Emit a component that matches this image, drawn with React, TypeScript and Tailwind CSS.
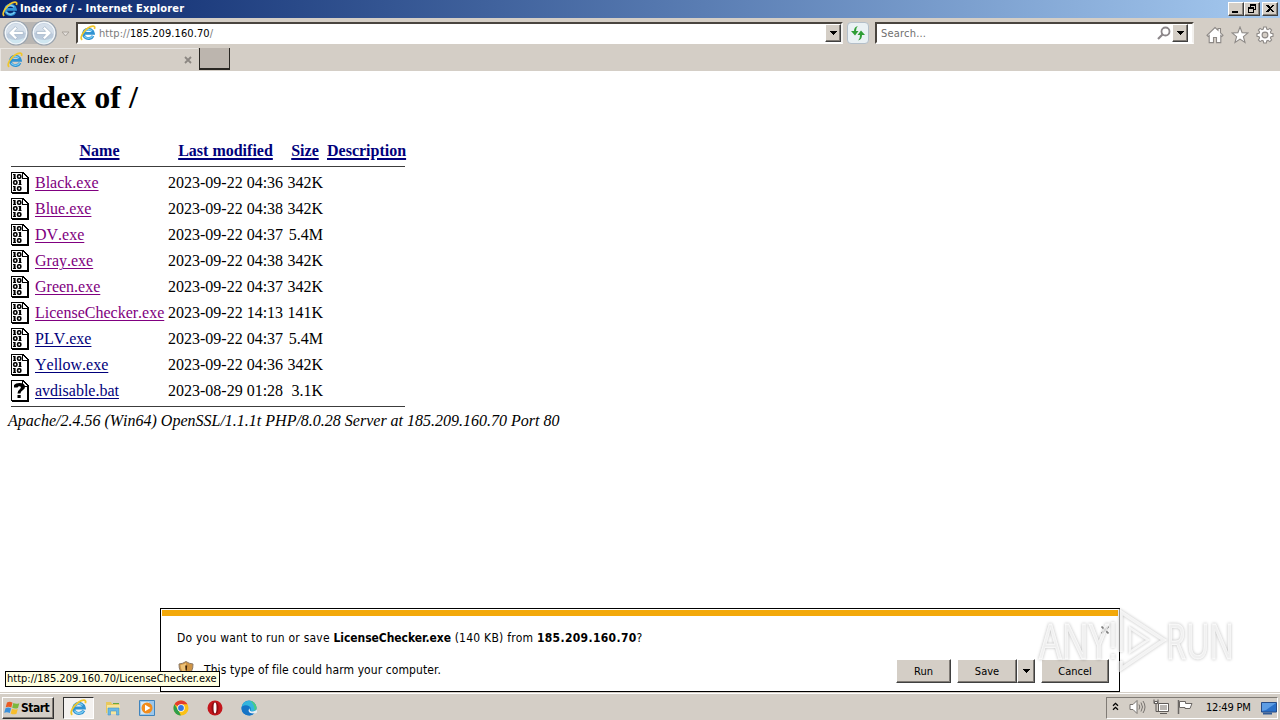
import type { ReactNode } from "react";

interface FileEntry {
  name: string;
  modified: string;
  size: string;
  visited?: boolean;
  unknown?: boolean;
}

const FILES: FileEntry[] = [
  { name: "Black.exe", modified: "2023-09-22 04:36", size: "342K", visited: true },
  { name: "Blue.exe", modified: "2023-09-22 04:38", size: "342K", visited: true },
  { name: "DV.exe", modified: "2023-09-22 04:37", size: "5.4M", visited: true },
  { name: "Gray.exe", modified: "2023-09-22 04:38", size: "342K", visited: true },
  { name: "Green.exe", modified: "2023-09-22 04:37", size: "342K", visited: true },
  { name: "LicenseChecker.exe", modified: "2023-09-22 14:13", size: "141K", visited: true },
  { name: "PLV.exe", modified: "2023-09-22 04:37", size: "5.4M" },
  { name: "Yellow.exe", modified: "2023-09-22 04:36", size: "342K" },
  { name: "avdisable.bat", modified: "2023-08-29 01:28", size: "3.1K", unknown: true },
];

function IeIcon({ className }: { className: string }) {
  return (
    <svg viewBox="0 0 16 16" className={className} aria-hidden="true">
      <path
        d="M13 10.800A5 4.700 0 1 1 13.400 8.400H4.500"
        fill="none"
        stroke="#2f93d3"
        strokeWidth="2.900"
      />
      <path
        d="M12.600 11A4.600 4.300 0 0 1 4.300 11M4.200 7.300A4.600 4.300 0 0 1 12 6"
        fill="none"
        stroke="#7dcdf3"
        strokeWidth="1.300"
      />
      <path
        d="M2.200 14.900C-.8 13 3.400 6 8 3c4.300-2.900 7.800-2.600 6.400 1"
        fill="none"
        stroke="#f0c62c"
        strokeWidth="1.700"
      />
    </svg>
  );
}

function BinaryIcon() {
  return (
    <svg viewBox="0 0 18 22" className="h-[22px] w-[18px]" aria-hidden="true">
      <g shapeRendering="crispEdges">
        <path d="M0 0h12l6 6v16H1V21H0z" fill="#000" />
        <path d="M1 1h10v6h5v13H1z" fill="#fff" />
        <path d="M12 2l4 4h-4z" fill="#fff" />
      </g>
      <g fill="#000">
        <path d="M2 2h2.600v4H5v1H2V6h.6V3H2z" />
        <path d="M7.500 8h2.600v4h.4v1h-3v-1h.6V9h-.6z" />
        <path d="M2 14h2.600v4H5v1H2v-1h.6v-3H2z" />
      </g>
      <g fill="none" stroke="#000" strokeWidth="1.600">
        <rect x="6.600" y="2.700" width="3.200" height="3.600" rx="1.200" />
        <rect x="2.700" y="8.700" width="3.200" height="3.600" rx="1.200" />
        <rect x="6.600" y="14.700" width="3.200" height="3.600" rx="1.200" />
      </g>
    </svg>
  );
}

function UnknownIcon() {
  return (
    <svg viewBox="0 0 18 22" className="h-[22px] w-[18px]" aria-hidden="true">
      <g shapeRendering="crispEdges">
        <path d="M0 0h12l6 6v16H1V21H0z" fill="#000" />
        <path d="M1 1h10v6h5v13H1z" fill="#fff" />
        <path d="M12 2l4 4h-4z" fill="#fff" />
      </g>
      <path d="M3 7.500V5q1.500-2 5.500-2 5.500 0 5.500 4 0 2-2.300 3.200T9.500 13.500H6.500q0-3 2.500-4.500 1.500-1.500.5-2.500Q7.500 5.500 6.500 7.500zM6.500 15h3.200v3H6.500z" fill="#000" />
    </svg>
  );
}

function Arrow({ className = "" }: { className?: string }) {
  return (
    <svg viewBox="0 0 7 4" className={`h-1 w-[7px] ${className}`} shapeRendering="crispEdges" aria-hidden="true">
      <path d="M0 0h7L3.500 4z" fill="#000" />
    </svg>
  );
}

function RoundArrow({ flip = false }: { flip?: boolean }) {
  return (
    <svg viewBox="0 0 26 26" className={`size-[26px] ${flip ? "-scale-x-100" : ""}`} aria-hidden="true">
      <circle cx="13" cy="13" r="12" fill="#d3dbe4" stroke="#9aa4af" strokeWidth="1.200" />
      <circle cx="13" cy="13" r="10.600" fill="#bccbdc" stroke="#f4f8fb" strokeWidth="1.200" />
      <path d="M3 14a10 10 0 0 1 20-1c-5-2-14-1-20 1z" fill="#d5dfea" />
      <path d="M5 18q8 4 16 0-3 5.500-8 5.500T5 18z" fill="#cfe6f0" />
      <path
        d="M5.500 13l6.800-6.500 1.900 1.900-2.800 3h8.900v3.200h-8.900l2.800 3-1.900 1.900z"
        fill="#fff"
        stroke="#9eb0c4"
        strokeWidth=".7"
      />
    </svg>
  );
}

function CaptionButton({ children, className = "" }: { children: ReactNode; className?: string }) {
  return (
    <span
      className={`flex h-[14px] w-4 border border-t-white border-r-[#404040] border-b-[#404040] border-l-white bg-[#d4cec6] shadow-[inset_-1px_-1px_0_#8a857e] ${className}`}
    >
      <svg viewBox="0 0 14 12" className="h-3 w-[14px]" shapeRendering="crispEdges" aria-hidden="true">
        {children}
      </svg>
    </span>
  );
}

function PushButton({ children, className }: { children: ReactNode; className: string }) {
  return (
    <button
      className={`flex items-center justify-center border border-t-white border-r-[#404040] border-b-[#404040] border-l-white bg-[#d4cec6] shadow-[inset_-1px_-1px_0_#807b75] ${className}`}
    >
      {children}
    </button>
  );
}

function TitleBar() {
  return (
    <div className="flex h-[18px] items-center bg-linear-to-r from-[#0a246a] to-[#a6caf0] pr-[2px] pl-[2px]">
      <IeIcon className="size-4" />
      <span className="ml-[2px] pt-px text-[11px] font-bold tracking-[0.16px] text-white">
        Index of / - Internet Explorer
      </span>
      <div className="ml-auto flex">
        <CaptionButton>
          <path d="M3 8h6v2H3z" />
        </CaptionButton>
        <CaptionButton>
          <path d="M5 1h6v6H9V6h1V3H6v1H5zM3 4h6v6H3zM4 6v3h4V6z" fillRule="evenodd" />
        </CaptionButton>
        <CaptionButton className="ml-[2px]">
          <path d="M3 2h2l2 2 2-2h2L8 5.500 11 9H9L7 7 5 9H3l3-3.500z" />
        </CaptionButton>
      </div>
    </div>
  );
}

function NavBar() {
  return (
    <div className="flex h-[30px] items-center">
      <div className="ml-[3px] flex h-[22px] w-[54px] items-center gap-[2px] rounded-full bg-[#b9b6b3]">
        <RoundArrow />
        <RoundArrow flip />
      </div>
      <svg viewBox="0 0 9 6" className="mt-[2px] ml-1 h-[6px] w-[9px]" aria-hidden="true">
        <path d="M1 1h7L4.500 5z" fill="#e4e0dc" stroke="#aaa49d" />
      </svg>
      <div className="ml-[6px] flex h-[22px] w-[767px] items-center border-2 border-t-[#4a453f] border-r-[#f3f1ee] border-b-white border-l-[#4a453f] bg-white pl-[2px]">
        <IeIcon className="size-4" />
        <span className="ml-[3px] pt-[2px] text-[11px] tracking-[0.08px] text-[#7b7b7b]">
          http://<span className="text-black">185.209.160.70</span>/
        </span>
        <PushButton className="ml-auto h-[18px] w-4">
          <Arrow />
        </PushButton>
      </div>
      <div className="ml-[4px] flex size-[22px] items-center justify-center rounded-sm border border-[#b4bfc9] bg-[#eaf1f4]">
        <svg viewBox="0 0 16 16" className="size-4" fill="#2f9e35" aria-hidden="true">
          <path d="M7.800 1Q4 2 4 6H1l4 4.500L8.500 6H6q-.2-3 1.800-5z" />
          <path d="M8.200 15.500Q12 14.500 12 10h3l-4-4.500L7.500 10H10q.2 3.500-1.800 5.500z" />
        </svg>
      </div>
      <div className="ml-[6px] flex h-[22px] w-[319px] items-center border-2 border-t-[#4a453f] border-r-[#f3f1ee] border-b-white border-l-[#4a453f] bg-white pl-1">
        <span className="pt-[3px] text-[11px] tracking-[0.2px] text-[#6f6f6f]">Search...</span>
        <svg viewBox="0 0 14 14" className="ml-auto size-[14px]" fill="none" aria-hidden="true">
          <circle cx="8.500" cy="5.500" r="4" stroke="#8b8689" strokeWidth="1.800" />
          <path d="M5.500 8.500L1 13" stroke="#8b8689" strokeWidth="2.200" />
        </svg>
        <PushButton className="mr-[4px] ml-[1px] h-[18px] w-4">
          <Arrow />
        </PushButton>
      </div>
      <div className="ml-[12px] flex gap-[7px] pt-1">
        <svg viewBox="0 0 18 18" className="size-[18px]" fill="#fff" stroke="#8d8986" strokeWidth="1.100" aria-hidden="true">
          <path d="M9 1.500L12 4.300V2.500h2.500v4.300l2.500 2.500-1.200 1.200-1-.9v7H10.500V11.500h-3v5.100H3.200v-7l-1 .9L1 9.300z" />
        </svg>
        <svg viewBox="0 0 18 18" className="size-[18px]" fill="#fff" stroke="#8d8986" strokeWidth="1.100" aria-hidden="true">
          <path d="M9 1l2.100 5.600 5.900.3-4.600 3.700 1.600 5.800L9 13.100l-5 3.300 1.600-5.800L1 6.900l5.900-.3z" />
        </svg>
        <svg viewBox="0 0 18 18" className="size-[18px]" fill="#fff" stroke="#8d8986" strokeWidth="1.100" aria-hidden="true">
          <path d="M7.700 1h2.600l.4 2.100 1.300.5 1.900-1.200 1.700 1.700-1.200 1.900.5 1.300 2.100.4v2.600l-2.100.4-.5 1.300 1.200 1.900-1.700 1.700-1.900-1.200-1.300.5-.4 2.100H7.700l-.4-2.100-1.300-.5-1.900 1.200-1.700-1.700L3.600 12l-.5-1.300L1 10.300V7.700l2.100-.4L3.600 6 2.400 4.100l1.700-1.700L6 3.600l1.300-.5z" />
          <circle cx="9" cy="9" r="2.900" fill="#d4cec6" />
        </svg>
      </div>
    </div>
  );
}

function TabRow() {
  return (
    <div className="flex h-[23px]">
      <div className="flex w-[198px] items-center border-t border-l border-[#e9e6e2] pl-[6px]">
        <IeIcon className="size-4" />
        <span className="ml-1 pt-px text-[11px] tracking-[0.2px]">Index of /</span>
        <svg viewBox="0 0 8 8" className="mr-[6px] ml-auto size-2" aria-hidden="true">
          <path d="M1 1l6 6M7 1L1 7" stroke="#8c8782" strokeWidth="1.800" />
        </svg>
      </div>
      <div className="ml-[1px] h-[22px] w-[31px] border-r border-b-2 border-l border-[#282622] bg-[#bcb5ae]" />
    </div>
  );
}

function HeaderLink({ children }: { children: ReactNode }) {
  return (
    <a href="#" className="text-center font-bold text-[#00007b] underline decoration-2 underline-offset-2">
      {children}
    </a>
  );
}

function DirectoryListing() {
  return (
    <main className="flex-1 bg-white pl-2 font-['Liberation_Serif',serif] text-[16px] leading-[18px] text-black [font-kerning:none]">
      <h1 className="pt-2 text-[32px] leading-9 font-bold">Index of /</h1>
      <div className="mt-[26px] ml-[3px] w-[394px]">
        <div className="grid h-[26px] grid-cols-[20px_129px_115px_36px_78px] gap-x-1 border-b border-[#3c3c3c] pt-[1px]">
          <span />
          <HeaderLink>Name</HeaderLink>
          <HeaderLink>Last modified</HeaderLink>
          <HeaderLink>Size</HeaderLink>
          <HeaderLink>Description</HeaderLink>
        </div>
        <div className="border-b border-[#3c3c3c] pt-[3px] pb-[2px]">
          {FILES.map((file) => (
            <div
              key={file.name}
              className="grid h-[26px] grid-cols-[20px_129px_115px_36px_78px] items-center gap-x-1 whitespace-nowrap"
            >
              <span>{file.unknown ? <UnknownIcon /> : <BinaryIcon />}</span>
              <span>
                <a
                  href="#"
                  className={`underline decoration-1 underline-offset-2 ${file.visited ? "text-[#800080]" : "text-[#00007b]"}`}
                >
                  {file.name}
                </a>
              </span>
              <span>{file.modified}</span>
              <span className="text-right">{file.size}</span>
            </div>
          ))}
        </div>
      </div>
      <address className="mt-[5px]">Apache/2.4.56 (Win64) OpenSSL/1.1.1t PHP/8.0.28 Server at 185.209.160.70 Port 80</address>
    </main>
  );
}

function DownloadPrompt() {
  return (
    <div className="absolute top-[608px] left-[160px] flex h-[84px] w-[960px] flex-col border border-black bg-white p-px">
      <div className="h-[6px] bg-[#f3a90b]" />
      <div className="flex items-start pt-[14px] pr-[9px] pl-[15px] leading-4">
        <span className="text-[12px] tracking-[0.22px]">
          Do you want to run or save <b className="tracking-[-0.06px]">LicenseChecker.exe</b>
          <span className="tracking-[0.24px]"> (140 KB) from </span>
          <b className="tracking-[0.34px]">185.209.160.70</b>?
        </span>
        <svg viewBox="0 0 8 8" className="-mt-1 ml-auto size-2" aria-hidden="true">
          <path d="M.5.5l7 7M7.500.5l-7 7" stroke="#858585" strokeWidth="1.600" />
        </svg>
      </div>
      <div className="mt-[13px] flex items-center pr-[9px] pl-4">
        <svg viewBox="0 0 16 16" className="-mt-[4px] size-4" aria-hidden="true">
          <path d="M1 3q4-.3 7-2.500Q11 2.700 15 3q.4 8.500-7 12.500Q.6 11.500 1 3z" fill="#cf9444" stroke="#8e7b67" />
          <path d="M8 2v12Q3 11 2.500 4 6 3.700 8 2z" fill="#edc277" />
          <path d="M7.200 4.500h2l-.4 5H7.600zM7.300 11h1.600v1.500H7.300z" fill="#3b2108" />
        </svg>
        <span className="-mt-[3px] ml-[10px] text-[12px] tracking-[0.09px]">This type of file could harm your computer.</span>
        <div className="ml-auto flex text-[11px]">
          <PushButton className="h-6 w-[55px] pt-[2px]">Run</PushButton>
          <PushButton className="ml-[6px] h-6 w-[60px] pt-[2px]">Save</PushButton>
          <PushButton className="h-6 w-[18px]">
            <Arrow />
          </PushButton>
          <PushButton className="ml-[6px] h-6 w-[68px] pt-[2px]">Cancel</PushButton>
        </div>
      </div>
    </div>
  );
}

function Watermark() {
  return (
    <svg
      viewBox="0 0 200 72"
      className="absolute top-[604px] left-[1036px] h-[72px] w-[200px] overflow-visible drop-shadow-[0_0_1.5px_rgba(0,0,0,0.34)]"
      aria-hidden="true"
    >
      <g
        fill="#fff"
        fillOpacity=".7"
        stroke="#fff"
        strokeOpacity=".75"
        strokeWidth=".8"
        fontFamily="'Open Sans', sans-serif"
        fontSize="50"
      >
        <text x="3" y="55" textLength="70" lengthAdjust="spacingAndGlyphs">
          ANY
        </text>
        <text x="130" y="55" textLength="68" lengthAdjust="spacingAndGlyphs">
          RUN
        </text>
        <g fill="none" strokeWidth="3.500">
          <path d="M77 18v26M77 50v5" />
          <path d="M85 48V8l43 28-43 29v-8" />
          <path d="M94 24l18 12-18 12z" strokeWidth="2.500" />
        </g>
      </g>
    </svg>
  );
}

function StartFlag() {
  return (
    <svg viewBox="0 0 16 16" className="size-4" aria-hidden="true">
      <path d="M3 2.500q3-1.500 5.500.2L7.300 7.500Q4.500 6 1.700 7.300z" fill="#ea5b24" />
      <path d="M9.300 3q2.700 1.500 6 .2L14 8q-3 1.300-5.800-.2z" fill="#7cb83d" />
      <path d="M1.500 8.200q2.800-1.300 5.600.2L5.800 13Q3 11.500.2 12.800z" fill="#3b91dc" />
      <path d="M8 8.700q2.800 1.500 5.800.2l-1.300 4.800q-3 1.300-5.800-.3z" fill="#f7bd2d" />
    </svg>
  );
}

function Taskbar() {
  return (
    <footer className="flex h-7 items-center border-t border-[#d4cec6] bg-[#d4cec6] shadow-[inset_0_1px_0_#fff]">
      <button className="mt-[2px] ml-[2px] flex h-[22px] w-[52px] items-center border border-t-white border-r-[#303030] border-b-[#303030] border-l-white pl-[1px] text-[12px] font-bold shadow-[inset_-1px_-1px_0_#807b75]">
        <StartFlag />
        <span className="ml-[1px] tracking-[-0.5px]">Start</span>
      </button>
      <div className="mt-[2px] ml-[9px] flex h-[22px] w-[31px] items-center justify-center border border-t-[#303030] border-r-white border-b-white border-l-[#303030] bg-[#f4f2f0]">
        <IeIcon className="size-[17px]" />
      </div>
      <div className="mt-[2px] ml-[11px] flex items-center gap-[18px]">
        <svg viewBox="0 0 16 16" className="size-4" aria-hidden="true">
          <path d="M1 2h5l1 2h7v9H1z" fill="#e8c85d" />
          <path d="M2 5h13v9H2z" fill="#f7e59b" />
          <path d="M3 8h11v7h-2.500v-4h-6v4H3z" fill="#69b8e5" stroke="#4594c7" strokeWidth=".6" />
          <path d="M8 3h6v1H8z" fill="#65a841" />
        </svg>
        <svg viewBox="0 0 16 16" className="size-4" aria-hidden="true">
          <path d="M.5.5h15v15H.5z" fill="#9cc7eb" stroke="#3f84bd" />
          <path d="M2 2h8v12H2z" fill="#d3e8f7" />
          <circle cx="8" cy="8" r="5.500" fill="#f28c1c" />
          <path d="M6 4.700v6.600L11.500 8z" fill="#fff" />
        </svg>
        <svg viewBox="0 0 16 16" className="size-4" aria-hidden="true">
          <circle cx="8" cy="8" r="7.500" fill="#fbc116" />
          <path d="M8 8L1.500 4.200A7.500 7.500 0 0 1 14.500 4.300H8z" fill="#e33b2e" />
          <path d="M1.500 4.200L6 11.500 7.900 15.500A7.500 7.500 0 0 1 1.500 4.200z" fill="#2d9e4b" />
          <circle cx="8" cy="8" r="3.700" fill="#fff" />
          <circle cx="8" cy="8" r="2.900" fill="#3476e0" />
        </svg>
        <svg viewBox="0 0 16 16" className="size-4" aria-hidden="true">
          <circle cx="8" cy="8" r="7.500" fill="#c4161c" />
          <ellipse cx="8" cy="8" rx="3.500" ry="6.300" fill="#8b0c12" />
          <ellipse cx="8" cy="8" rx="1.500" ry="5.400" fill="#fff" />
        </svg>
        <svg viewBox="0 0 16 16" className="size-4" aria-hidden="true">
          <circle cx="8" cy="8" r="7.500" fill="#1684d1" />
          <path d="M.6 7A7.500 7.500 0 0 1 15.500 8c0 2.500-2 3.600-4.500 3.300-2-.2-1.300-1-1-2C10.500 6.500 5 3.800.6 7z" fill="#35b5dd" />
          <path d="M9 .7A7.500 7.500 0 0 1 15.500 8q-.2 2-2 2.900Q14 4.500 9 .7z" fill="#4bcd7f" />
          <path d="M.6 7C5 3.800 9.300 6 8.500 8c-1 2 1 5 5.800 4-2 3-5 3.800-7.500 3.300C1.500 14 .3 11 .6 7z" fill="#1674c6" />
          <path d="M9 8.300q-.8 2.500 1 3 2 .4 6-1.300v2.500l-2 1q-6.500.5-6.500-3.500z" fill="#e8eef2" />
        </svg>
      </div>
      <div className="mt-[2px] mr-[2px] ml-auto flex h-[22px] w-[172px] items-center border border-t-[#807b75] border-r-white border-b-white border-l-[#807b75] pl-[5px]">
        <svg viewBox="0 0 7 9" className="-mt-[2px] h-[9px] w-[7px]" fill="none" stroke="#000" strokeWidth="1.300" aria-hidden="true">
          <path d="M1 3.800l2.500-2.500L6 3.800M1 7.800l2.500-2.500L6 7.800" />
        </svg>
        <svg viewBox="0 0 17 16" className="-mt-px ml-[10px] h-4 w-[17px]" fill="#fff" stroke="#77736f" aria-hidden="true">
          <path d="M1 5.500h3l4-4v13l-4-4H1z" />
          <path d="M10 5.500q1.600 2.500 0 5M12 3.500q3 4.500 0 9M14 2q4 6 0 12" fill="none" />
        </svg>
        <svg viewBox="0 0 16 16" className="-mt-px ml-[7px] size-4" fill="#fff" stroke="#5f5b58" aria-hidden="true">
          <path d="M5.500 4.500h10v8h-10zM7 14.500h7" />
          <path d="M7 6h7v5H7z" fill="#b9b5b1" stroke="none" />
          <path d="M1 .5v4h4v-4M3 4.500v8h3" fill="none" />
          <path d="M1.500 2.500h3v2h-3z" />
        </svg>
        <svg viewBox="0 0 16 16" className="-mt-px ml-2 size-4" fill="#fff" stroke="#6b6764" aria-hidden="true">
          <path d="M1.500 1v14" strokeWidth="1.500" />
          <path d="M2.500 2.500h6v2h6.500l-2 5H8v-1H2.500z" />
        </svg>
        <span className="ml-[13px] pt-px text-[11px] tracking-[-0.2px] whitespace-nowrap">12:49 PM</span>
        <svg viewBox="0 0 16 14" className="ml-auto h-[14px] w-4" aria-hidden="true">
          <path d="M.5 1.500h15v9.500H.5z" fill="#2a70c8" stroke="#264c87" />
          <path d="M1 2h14L5 9 1 10z" fill="#5d9de4" />
          <path d="M2 11.500h9v2H2z" fill="#315b96" />
        </svg>
      </div>
    </footer>
  );
}

export default function App() {
  return (
    <div className="relative flex h-[720px] w-[1280px] flex-col overflow-hidden bg-[#d4cec6] font-['DejaVu_Sans_Condensed','DejaVu_Sans',sans-serif] text-black">
      <TitleBar />
      <NavBar />
      <TabRow />
      <DirectoryListing />
      <Taskbar />
      <DownloadPrompt />
      {/* Link target shown while hovering */}
      <div className="absolute top-[671px] left-[5px] flex h-4 w-[215px] items-center border border-black bg-[#ffffe1] pt-px pl-px text-[11px] tracking-[0px] whitespace-nowrap">
        http://185.209.160.70/LicenseChecker.exe
      </div>
      <Watermark />
    </div>
  );
}
